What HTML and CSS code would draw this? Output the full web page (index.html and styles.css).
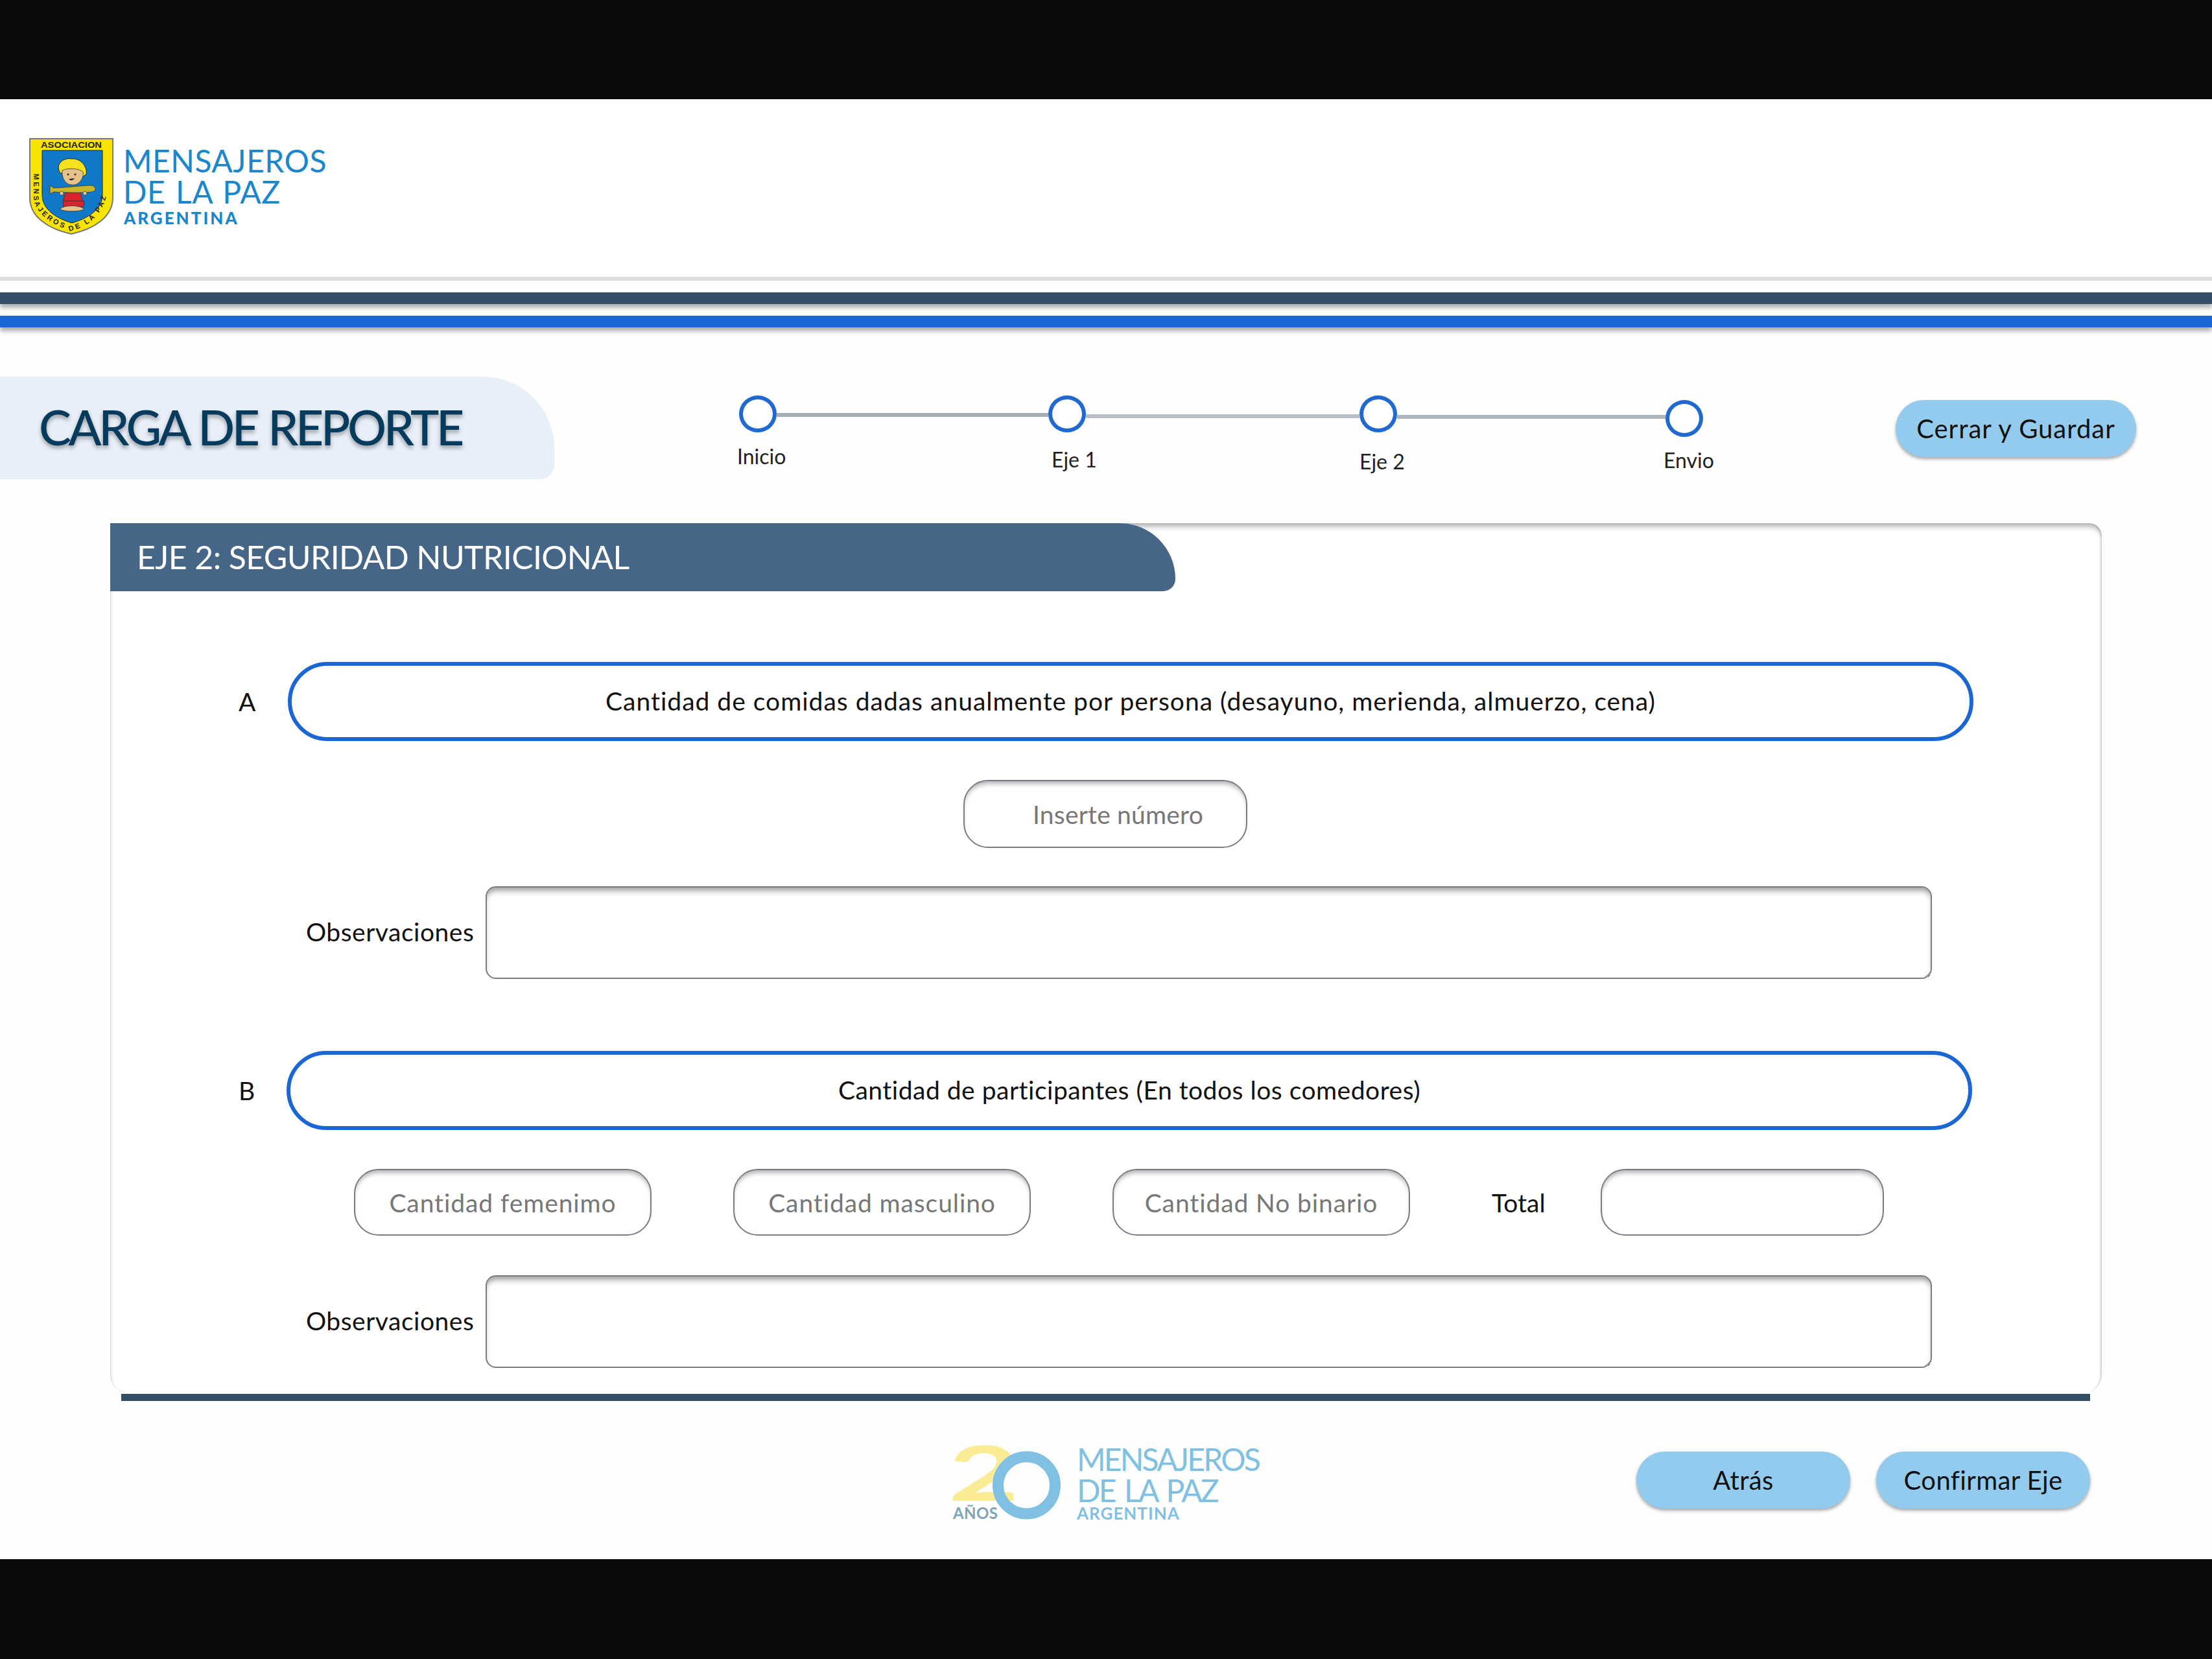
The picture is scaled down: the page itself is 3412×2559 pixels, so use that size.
FILE: index.html
```html
<!DOCTYPE html>
<html lang="es">
<head>
    <meta charset="UTF-8">
    <title>Carga de reporte - Mensajeros de la Paz</title>
    <link rel="stylesheet" href="styles.css">
</head>
<body>

    <div class="franja"></div>

    <header class="encabezado">
        <svg class="escudo" viewBox="0 0 130 149">
            <path d="M1 1H129V92C129 122 100 140 65 148C30 140 1 122 1 92Z" fill="#f7e400" stroke="#77777a" stroke-width="2"/>
            <path d="M20 19H113V88C113 110 90 124 66 131C42 124 20 110 20 88Z" fill="#0f78c8" stroke="#222" stroke-width="1"/>
            <text class="escudo-txt" x="65" y="15" text-anchor="middle" textLength="94" lengthAdjust="spacingAndGlyphs">ASOCIACION</text>
            <path id="curva" d="M7 55V92C7 116 40 136 65 143C92 136 122 116 122 62" fill="none"/>
            <text class="escudo-curva"><textPath href="#curva" textLength="198" lengthAdjust="spacing">MENSAJEROS DE LA PAZ</textPath></text>
            <!-- nene con la trompeta -->
            <path d="M46 50C42 38 54 30 66 32C78 31 90 42 88 56L82 60C80 50 72 48 62 48C56 50 52 52 48 55Z" fill="#f5e11c" stroke="#222" stroke-width="1"/>
            <path d="M51 50C58 46 76 46 83 52C85 62 76 74 66 72C56 72 50 62 51 50Z" fill="#e6c489" stroke="#333" stroke-width=".8"/>
            <circle cx="60" cy="56" r="1.6" fill="#333"/>
            <circle cx="71" cy="56" r="1.6" fill="#333"/>
            <path d="M61 63Q66 68 70 62Z" fill="#222"/>
            <path d="M56 84H79L83 97H52Z" fill="#d8242c" stroke="#333" stroke-width=".8"/>
            <path d="M52 97H85L84 106H53Z" fill="#d8242c" stroke="#333" stroke-width=".8"/>
            <path d="M48 109C54 103 78 103 84 109C84 114 48 114 48 109Z" fill="#e6c489" stroke="#333" stroke-width=".8"/>
            <path d="M32 73L38 77C58 76 85 73 96 73C104 75 104 82 96 83C80 85 55 84 38 83L32 86Z" fill="#cdb52a" stroke="#333" stroke-width=".8"/>
            <circle cx="50" cy="85" r="3" fill="#e6c489" stroke="#333" stroke-width=".6"/>
            <circle cx="86" cy="85" r="3" fill="#e6c489" stroke="#333" stroke-width=".6"/>
        </svg>
        <div class="logo-txt">
            <div class="logo-linea">MENSAJEROS</div>
            <div class="logo-linea">DE LA PAZ</div>
            <div class="logo-pais">ARGENTINA</div>
        </div>
    </header>

    <div class="barra barra-oscura"></div>
    <div class="barra barra-azul"></div>

    <section class="toolbar">
        <div class="titulo"><h1>CARGA DE REPORTE</h1></div>

        <div class="stepper">
            <div class="paso">
                <span class="circulo"></span>
                <span class="paso-txt paso-inicio">Inicio</span>
            </div>
            <span class="linea linea-1"></span>
            <div class="paso">
                <span class="circulo"></span>
                <span class="paso-txt paso-eje1">Eje 1</span>
            </div>
            <span class="linea linea-2"></span>
            <div class="paso">
                <span class="circulo"></span>
                <span class="paso-txt paso-eje2">Eje 2</span>
            </div>
            <span class="linea linea-3"></span>
            <div class="paso paso-ultimo">
                <span class="circulo"></span>
                <span class="paso-txt paso-envio">Envio</span>
            </div>
        </div>

        <button class="boton boton-cerrar">Cerrar y Guardar</button>
    </section>

    <main class="tarjeta">
        <div class="eje-titulo">EJE 2: SEGURIDAD NUTRICIONAL</div>

        <div class="pregunta pregunta-a">
            <span class="letra">A</span>
            <div class="pregunta-txt">Cantidad de comidas dadas anualmente por persona (desayuno, merienda, almuerzo, cena)</div>
        </div>

        <div class="respuesta respuesta-a">
            <input class="campo campo-numero" type="text" placeholder="Inserte número">
        </div>

        <div class="observaciones">
            <label>Observaciones</label>
            <textarea></textarea>
        </div>

        <div class="pregunta pregunta-b">
            <span class="letra">B</span>
            <div class="pregunta-txt">Cantidad de participantes (En todos los comedores)</div>
        </div>

        <div class="respuesta respuesta-b">
            <input class="campo" type="text" placeholder="Cantidad femenimo">
            <input class="campo" type="text" placeholder="Cantidad masculino">
            <input class="campo" type="text" placeholder="Cantidad No binario">
            <div class="total">
                <label>Total</label>
                <input class="campo campo-total" type="text">
            </div>
        </div>

        <div class="observaciones">
            <label>Observaciones</label>
            <textarea></textarea>
        </div>
    </main>

    <div class="cierre"></div>

    <footer class="pie">
        <div class="pie-logo">
            <svg class="veinte" viewBox="-12 -40 182 160">
                <text class="veinte-dos" transform="translate(-7 84) scale(1.62 1)" x="0" y="0">2</text>
                <ellipse cx="113.5" cy="60" rx="44" ry="44" fill="none" stroke="#80c0e3" stroke-width="17"/>
                <text class="veinte-anos" x="0" y="112">AÑOS</text>
            </svg>
            <div class="logo-txt logo-claro">
                <div class="logo-linea">MENSAJEROS</div>
                <div class="logo-linea">DE LA PAZ</div>
                <div class="logo-pais">ARGENTINA</div>
            </div>
        </div>
        <div class="pie-botones">
            <button class="boton boton-pie">Atrás</button>
            <button class="boton boton-pie">Confirmar Eje</button>
        </div>
    </footer>

    <div class="franja franja-baja"></div>

</body>
</html>
```

FILE: styles.css
```css
* {
    box-sizing: border-box;
}
body {
    margin: 0;
    background: #fefefe;
    font-family: Lato, "Open Sans", sans-serif;
    color: #111;
    font-size: 39px;
}
.franja {
    height: 153px;
    background: #0a0a0a;
}
.franja-baja {
    height: 154px;
}

/* encabezado */
.encabezado {
    height: 280px;
    padding: 60px 0 0 45px;
    display: flex;
    align-items: flex-start;
    gap: 15px;
    border-bottom: 6px solid #dedede;
    background: #fff;
}
.escudo {
    width: 130px;
    height: 149px;
    flex: none;
}
.escudo-txt {
    font: bold 12px "Liberation Sans", sans-serif;
    fill: #222;
}
.escudo-curva {
    font: bold 11px "Liberation Sans", sans-serif;
    fill: #222;
}
.logo-txt {
    color: #1a86cb;
    padding-top: 11px;
}
.logo-linea {
    font-size: 48px;
    line-height: 48px;
    white-space: nowrap;
    letter-spacing: 0.5px;
    word-spacing: 3px;
}
.logo-pais {
    font-size: 26px;
    line-height: 26px;
    font-weight: 900;
    letter-spacing: 3px;
    margin: 3px 0 0 1px;
}

/* barras */
.barra {
    height: 18px;
    box-shadow: 0 6px 6px rgba(0,0,0,0.3);
}
.barra-oscura {
    background: #364d66;
    margin-top: 18px;
}
.barra-azul {
    background: #1a66d4;
    margin-top: 18px;
}

/* titulo y pasos */
.toolbar {
    margin-top: 76px;
    height: 158px;
    display: flex;
    align-items: flex-start;
}
.titulo {
    width: 855px;
    height: 158px;
    background: #e8eff8;
    border-radius: 0 110px 22px 0;
    padding: 0 0 4px 60px;
    display: flex;
    align-items: center;
}
h1 {
    margin: 0;
    font-size: 75px;
    font-weight: 500;
    letter-spacing: -4.4px;
    word-spacing: 2px;
    color: #073b5e;
    text-shadow: 0 4px 6px rgba(0,0,0,0.35);
    white-space: nowrap;
}
.stepper {
    margin: 29px 0 0 285px;
    display: flex;
    align-items: flex-start;
}
.paso {
    width: 58px;
    flex: none;
    display: flex;
    flex-direction: column;
}
.paso-ultimo {
    margin-top: 7px;
}
.circulo {
    width: 58px;
    height: 57px;
    border: 6px solid #1f69d0;
    border-radius: 50%;
    background: #fff;
}
.paso-txt {
    font-size: 32px;
    white-space: nowrap;
    color: #222;
}
.paso-inicio {
    margin: 17px 0 0 -3px;
}
.paso-eje1 {
    margin: 22px 0 0 5px;
}
.paso-eje2 {
    margin: 25px 0 0 0;
}
.paso-envio {
    margin: 16px 0 0 -3px;
}
.linea {
    height: 6px;
    flex: none;
    margin-top: 27px;
    background: #a5adb5;
}
.linea-1 {
    width: 419px;
}
.linea-2 {
    width: 422px;
    margin-top: 29px;
    background: #bbc0c5;
}
.linea-3 {
    width: 414px;
    margin-top: 30px;
    background: #abb3bb;
}
.boton {
    border: none;
    background: #93cbef;
    font-family: inherit;
    font-size: 40px;
    letter-spacing: 0.4px;
    color: #111;
    box-shadow: 0 3px 5px rgba(0,0,0,0.35);
    cursor: pointer;
}
.boton-cerrar {
    width: 371px;
    height: 88px;
    border-radius: 44px;
    letter-spacing: 1px;
    margin: 36px 117px 0 auto;
}

/* tarjeta */
.tarjeta {
    margin: 68px 0 0 170px;
    width: 3072px;
    height: 1343px;
    background: #fff;
    border-radius: 0 20px 30px 30px;
    box-shadow: inset 0 8px 8px -3px rgba(0,0,0,0.32), inset 2px 0 2px -1px rgba(0,0,0,0.12), inset -3px 0 2px -1px rgba(0,0,0,0.12);
}
.eje-titulo {
    width: 1643px;
    height: 105px;
    padding-left: 41px;
    background: #456687;
    color: #fff;
    font-size: 50px;
    letter-spacing: -0.6px;
    line-height: 105px;
    border-radius: 0 90px 20px 0;
    white-space: nowrap;
}
.pregunta {
    display: flex;
    align-items: center;
    margin-top: 109px;
    padding-left: 198px;
}
.pregunta-b {
    margin-top: 111px;
    padding-left: 198px;
}
.letra {
    width: 76px;
    flex: none;
}
.pregunta-b .letra {
    width: 74px;
}
.pregunta-txt {
    width: 2600px;
    height: 122px;
    border: 6px solid #1a66d4;
    border-radius: 61px;
    text-align: center;
    line-height: 108px;
    letter-spacing: 1px;
    white-space: nowrap;
}
.pregunta-b .pregunta-txt {
    letter-spacing: 0.5px;
}
.respuesta {
    margin-top: 60px;
    display: flex;
    align-items: center;
}
.respuesta-a {
    padding-left: 1316px;
}
.respuesta-b {
    padding-left: 376px;
    gap: 126px;
}
.campo {
    width: 459px;
    height: 103px;
    border: 2px solid #7a7a85;
    border-radius: 38px;
    background: #fff;
    font-family: inherit;
    font-size: 39px;
    letter-spacing: 0.9px;
    text-align: center;
    box-shadow: inset 0 7px 7px -3px rgba(0,0,0,0.3);
    outline: none;
}
.campo::placeholder {
    color: #777;
    opacity: 1;
}
.campo-numero {
    width: 438px;
    height: 105px;
    padding-left: 105px;
    letter-spacing: 0.2px;
    text-align: left;
}
.total {
    display: flex;
    align-items: center;
    gap: 85px;
}
.campo-total {
    width: 437px;
}
.observaciones {
    margin-top: 59px;
    padding-left: 302px;
    display: flex;
    align-items: center;
    gap: 19px;
}
.respuesta-b + .observaciones {
    margin-top: 61px;
}
.observaciones label {
    width: 258px;
    flex: none;
    white-space: nowrap;
    letter-spacing: 0.5px;
    margin-top: -3px;
}
.observaciones textarea {
    width: 2231px;
    height: 143px;
    border: 2px solid #7a7a85;
    border-radius: 16px;
    background: #fff;
    box-shadow: inset 0 8px 8px -3px rgba(0,0,0,0.38);
    outline: none;
}
.cierre {
    margin-left: 187px;
    width: 3037px;
    height: 11px;
    background: #344e68;
}

/* pie */
.pie {
    height: 244px;
    display: flex;
    align-items: flex-start;
    padding: 70px 188px 0 1458px;
}
.pie-logo {
    display: flex;
    align-items: flex-start;
    gap: 21px;
}
.veinte {
    width: 182px;
    height: 160px;
    margin-top: -40px;
    flex: none;
}
.veinte-dos {
    font: bold 116px Lato, sans-serif;
    fill: #faec95;
}
.veinte-anos {
    font: bold 24px Lato, sans-serif;
    letter-spacing: 0.4px;
    fill: #7da4b8;
}
.logo-claro {
    color: #80c0e3;
    padding-top: 0;
    margin-top: -4px;
}
.logo-claro .logo-linea {
    letter-spacing: -2.8px;
    word-spacing: 5px;
}
.logo-claro .logo-pais {
    font-weight: bold;
    letter-spacing: 1px;
    margin: -2px 0 0;
}
.pie-botones {
    margin: 8px 0 0 auto;
    display: flex;
    gap: 40px;
}
.boton-pie {
    width: 330px;
    height: 88px;
    border-radius: 44px;
}
```
